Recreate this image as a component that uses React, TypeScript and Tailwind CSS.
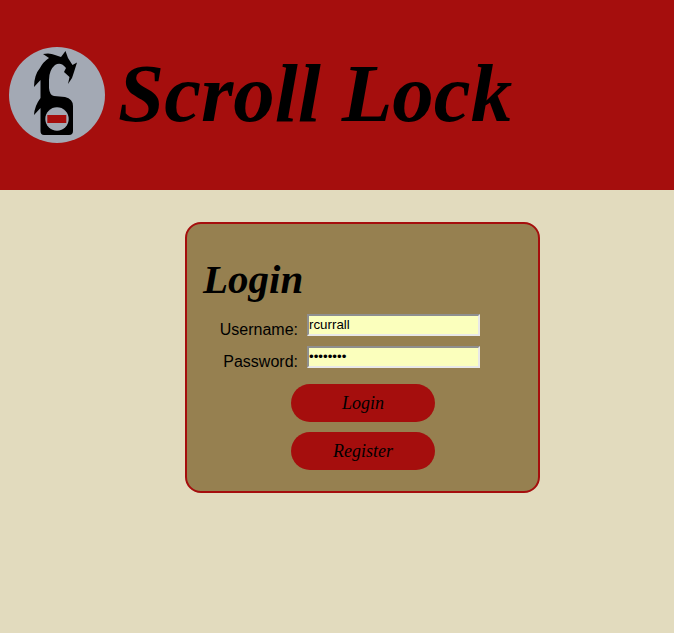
function Logo() {
  return (
    <svg viewBox="9 47 96 96" className="w-24 h-24 shrink-0">
      <circle cx="57" cy="95" r="48" fill="#a3a9b4" />
      {/* dragon neck and tag */}
      <path
        fill="#000"
        d="M44 135 Q40.5 135 40.5 131 L40.5 108 L34 115 Q34.5 106 40.5 98 L40.5 80 L34 87 Q34 75 40 68 Q43 62 49 58 L43 54 Q50 52.5 55 55 L61 57 L65.5 51 L68 58 L72.5 65 L77 62.5 L74 72 L72 78 L68 84 L69.5 77 L64 72 L66 68 Q61 61.5 55 65 Q49 70 49 80 L49 88 Q49.5 95 54 96 L65 97 Q73 99 73 106 L73 131 Q73 135 69 135 Z"
      />
      <circle cx="57" cy="119" r="11.7" fill="#a3a9b4" />
      <rect x="47.3" y="115" width="19" height="8" fill="#a50e0d" />
    </svg>
  );
}

export default function App() {
  return (
    <div className="min-h-[633px] bg-[#e2dbbe] font-['Liberation_Sans',sans-serif] text-black">
      {/* Banner */}
      <header className="h-[190px] bg-[#a50e0d] flex items-center pl-[9px]">
        <Logo />
        <h1 className="ml-[13px] mb-[4px] font-['Liberation_Serif',serif] italic font-bold text-[83px] leading-none">
          Scroll Lock
        </h1>
      </header>

      {/* Login card */}
      <main className="pt-8 pl-[185px]">
        <div className="w-[355px] h-[271px] border-2 border-[#a50e0d] rounded-2xl bg-[#968050] px-4 pt-[28px]">
          <h2 className="font-['Liberation_Serif',serif] italic font-bold text-[41px] leading-[54px] h-[54px]">
            Login
          </h2>
          <div className="mt-[8px] flex flex-col gap-2.5">
            <div className="flex h-[22px]">
              <label className="w-[95px] text-right text-base leading-[18px] pt-[7px]">Username:</label>
              <input
                readOnly
                value="rcurrall"
                className="ml-[9px] w-[173px] h-[22px] bg-[#fbffbd] border-2 border-t-[#8f8f8f] border-l-[#8f8f8f] border-r-[#e8e8e8] border-b-[#e8e8e8] text-[13.33px] pl-0 pb-0.5 outline-none"
              />
            </div>
            <div className="flex h-[22px]">
              <label className="w-[95px] text-right text-base leading-[18px] pt-[7px]">Password:</label>
              <input
                readOnly
                type="password"
                value="password"
                className="ml-[9px] w-[173px] h-[22px] bg-[#fbffbd] border-2 border-t-[#8f8f8f] border-l-[#8f8f8f] border-r-[#e8e8e8] border-b-[#e8e8e8] text-[13.33px] pl-0 pb-0.5 outline-none"
              />
            </div>
          </div>
          <div className="mt-4 ml-[88px] w-36 flex flex-col gap-2.5">
            <button className="h-[38px] rounded-[19px] bg-[#a50e0d] font-['Liberation_Serif',serif] italic text-[18px]">
              Login
            </button>
            <button className="h-[38px] rounded-[19px] bg-[#a50e0d] font-['Liberation_Serif',serif] italic text-[18px]">
              Register
            </button>
          </div>
        </div>
      </main>
    </div>
  );
}
